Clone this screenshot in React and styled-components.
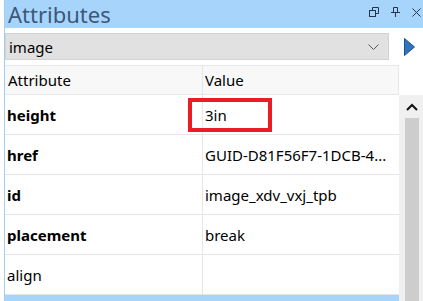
import React from 'react'
import styled, {createGlobalStyle} from 'styled-components'

const Global = createGlobalStyle`
  html, body {
    margin: 0;
    padding: 0;
    background: #ffffff;
  }
  body {
    font-family: "Noto Sans", "Open Sans", sans-serif;
    color: #000;
  }
`

const Panel = styled.div`
  width: 423px;
  height: 301px;
  overflow: hidden;
  box-sizing: border-box;
  margin-left: 4px;
  border-left: 1px solid #a6cdef;
  display: flex;
  flex-direction: column;
`

const TitleBar = styled.div`
  height: 28px;
  box-sizing: border-box;
  background: #a7d4fb;
  display: flex;
  align-items: flex-start;
  padding: 0 6px 0 3px;
  flex-shrink: 0;
`

const Title = styled.div`
  flex: 1;
  font-size: 22px;
  line-height: 28px;
  height: 28px;
  color: #3b5878;
`

const TitleIcons = styled.div`
  display: flex;
  align-items: center;
  gap: 12px;
  margin-top: 7px;
`

const Picker = styled.div`
  display: flex;
  align-items: center;
  margin-top: 5px;
  height: 27px;
  flex-shrink: 0;
`

const Select = styled.div`
  width: 384px;
  height: 27px;
  box-sizing: border-box;
  background: #e1e1e1;
  border: 1px solid #d2d2d2;
  display: flex;
  align-items: center;
  justify-content: space-between;
  padding: 0 9px 0 3px;
  font-size: 15px;
`

const Go = styled.div`
  flex: 1;
  display: flex;
  justify-content: center;
  padding-left: 2px;
`

const Grid = styled.div`
  margin-top: 5px;
  display: grid;
  grid-template-columns: 394px 24px;
  grid-template-rows: 30px 1fr;
  flex: 1;
  min-height: 0;
`

const Header = styled.div`
  grid-column: 1;
  display: grid;
  grid-template-columns: 197px 1fr;
  background: #f8f8f8;
  border: 1px solid #e6e6e6;
  border-left: none;
  box-sizing: border-box;
`

const HeadCell = styled.div`
  font-size: 15px;
  display: flex;
  align-items: center;
  padding-left: ${p => p.$pad || 2}px;
  border-left: ${p => (p.$divider ? '1px solid #e6e6e6' : 'none')};
`

const Rows = styled.div`
  grid-column: 1;
  grid-row: 2;
  display: flex;
  flex-direction: column;
`

const Row = styled.div`
  display: grid;
  grid-template-columns: 197px 1fr;
  height: 40px;
  flex-shrink: 0;
  box-sizing: border-box;
  border-bottom: 1px solid #e6e6e6;
  background: ${p => (p.$selected ? '#a7d4fb' : '#fff')};
`

const Cell = styled.div`
  position: relative;
  display: flex;
  align-items: center;
  font-size: 15px;
  font-weight: ${p => (p.$bold ? 700 : 400)};
  padding-left: ${p => p.$pad || 2}px;
  border-left: ${p => (p.$divider ? '1px solid #e6e6e6' : 'none')};
  white-space: nowrap;
  overflow: hidden;
`

const Highlight = styled.div`
  position: absolute;
  left: -15px;
  top: 3px;
  width: 84px;
  height: 34px;
  box-sizing: border-box;
  border: 4px solid #ed1c24;
`

const ValueCell = styled(Cell)`
  overflow: visible;
`

const Scrollbar = styled.div`
  grid-column: 2;
  grid-row: 2;
  background: #f0f0f0;
  display: flex;
  flex-direction: column;
  align-items: center;
  padding-left: 2px;
`

const ArrowUp = styled.div`
  height: 23px;
  display: flex;
  align-items: center;
  justify-content: center;
`

const Thumb = styled.div`
  width: 14px;
  flex: 1;
  margin-bottom: 5px;
  background: #cdcdcd;
`

const rows = [
  {name: 'height', value: '3in', bold: true, marked: true},
  {name: 'href', value: 'GUID-D81F56F7-1DCB-4...', bold: true},
  {name: 'id', value: 'image_xdv_vxj_tpb', bold: true},
  {name: 'placement', value: 'break', bold: true},
  {name: 'align', value: '', bold: false},
]

export default function App() {
  return (
    <>
      <Global />
      <Panel>
        <TitleBar>
          <Title>Attributes</Title>
          <TitleIcons>
            <svg width="10" height="10" viewBox="0 0 10 10" fill="none" stroke="#24344a" strokeWidth="1">
              <rect x="0.5" y="3.5" width="6" height="6" />
              <path d="M3.5 3.5V0.5H9.5V6.5H6.5" />
            </svg>
            <svg width="9" height="10" viewBox="0 0 9 10" fill="none" stroke="#24344a" strokeWidth="1">
              <path d="M2.5 0.5H6.5V5.5H2.5Z M0 5.5H9 M4.5 5.5V10" />
            </svg>
            <svg width="9" height="9" viewBox="0 0 9 9" fill="none" stroke="#24344a" strokeWidth="1">
              <path d="M0.5 0.5L8.5 8.5M8.5 0.5L0.5 8.5" />
            </svg>
          </TitleIcons>
        </TitleBar>
        <Picker>
          <Select>
            <span>image</span>
            <svg width="11" height="6" viewBox="0 0 11 6" fill="none" stroke="#555" strokeWidth="1">
              <path d="M0.5 0.5L5.5 5.5L10.5 0.5" />
            </svg>
          </Select>
          <Go>
            <svg width="11" height="18" viewBox="0 0 11 18">
              <path d="M0.5 0.5L10.5 9L0.5 17.5Z" fill="#2f74bd" stroke="#1f4f8a" strokeWidth="1" />
            </svg>
          </Go>
        </Picker>
        <Grid>
          <Header>
            <HeadCell $pad={3}>Attribute</HeadCell>
            <HeadCell $divider>Value</HeadCell>
          </Header>
          <Rows>
            {rows.map(r => (
              <Row key={r.name}>
                <Cell $bold={r.bold} $pad={2}>{r.name}</Cell>
                <ValueCell $divider>
                  {r.marked && <Highlight />}
                  {r.value}
                </ValueCell>
              </Row>
            ))}
            <Row $selected />
          </Rows>
          <Scrollbar>
            <ArrowUp>
              <svg width="12" height="8" viewBox="0 0 12 8" fill="none" stroke="#111" strokeWidth="2">
                <path d="M1 7L6 2L11 7" />
              </svg>
            </ArrowUp>
            <Thumb />
          </Scrollbar>
        </Grid>
      </Panel>
    </>
  )
}
